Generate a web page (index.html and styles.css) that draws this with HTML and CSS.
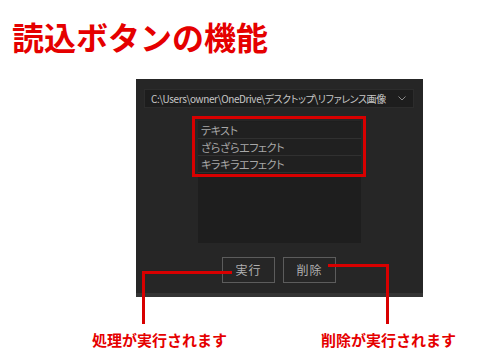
FILE: index.html
```html
<!DOCTYPE html>
<html lang="ja">
<head>
<meta charset="utf-8">
<title>読込ボタンの機能</title>
<link rel="stylesheet" href="styles.css">
</head>
<body>
<div class="page">
  <h1 class="title">読込ボタンの機能</h1>
  <div class="panel">
    <div class="dropdown">
      <span class="path">C:\Users\owner\OneDrive\デスクトップ\リファレンス画像</span>
      <svg class="chev" width="8" height="5" viewBox="0 0 8 5"><path d="M0.5 0.5 L4 4 L7.5 0.5" fill="none" stroke="#8a8a8a" stroke-width="1"/></svg>
    </div>
    <ul class="list">
      <li class="item">テキスト</li>
      <li class="item">ざらざらエフェクト</li>
      <li class="item">キラキラエフェクト</li>
    </ul>
    <div class="buttons">
      <button class="btn">実行</button>
      <button class="btn">削除</button>
    </div>
    <div class="panel-foot"></div>
  </div>
  <div class="labels">
    <span class="label label-run">処理が実行されます</span>
    <span class="label label-del">削除が実行されます</span>
  </div>

  <div class="hl-box"></div>
  <div class="ln ln-run-h"></div>
  <div class="ln ln-run-v"></div>
  <div class="ln ln-del-h"></div>
  <div class="ln ln-del-v"></div>
</div>
</body>
</html>
```
FILE: styles.css
```css
* { box-sizing: border-box; }
html, body { margin: 0; padding: 0; background: #fff; }
.page {
  position: relative;
  width: 498px;
  height: 364px;
  overflow: hidden;
  font-family: "Noto Sans CJK JP", "Noto Sans", sans-serif;
}
.title {
  margin: 0;
  padding: 20px 0 0 12px;
  height: 52px;
  font-size: 32px;
  line-height: 32px;
  font-weight: 700;
  color: #e50000;
}
.panel {
  margin: 27px 0 0 136px;
  width: 287px;
  height: 218px;
  background: #262626;
  display: flex;
  flex-direction: column;
}
.dropdown {
  margin: 10px 0 0 8px;
  width: 270px;
  height: 19px;
  background: #1d1d1d;
  border: 1px solid #2c2c2c;
  display: flex;
  align-items: center;
  padding: 0 6px 0 6px;
  justify-content: space-between;
}
.path {
  font-size: 10px;
  line-height: 17px;
  color: #c8c8c8;
  font-feature-settings: "palt";
  letter-spacing: -0.4px;
  white-space: nowrap;
}
.chev { margin-right: 1px; }
.list {
  list-style: none;
  margin: 13px 0 0 62px;
  padding: 1px 0 0 0;
  width: 163px;
  height: 122px;
  background: #1e1e1e;
}
.item {
  height: 17px;
  border-bottom: 1px solid #303030;
  padding-left: 3px;
  font-size: 11px;
  line-height: 16px;
  color: #a8a8a8;
  font-feature-settings: "palt";
  letter-spacing: -0.4px;
  background: #202020;
}
.buttons {
  display: flex;
  gap: 8px;
  margin: 14px 0 0 86px;
}
.btn {
  width: 53px;
  height: 26px;
  background: transparent;
  border: 1px solid #5c5c5c;
  color: #b0b0b0;
  font-family: "Noto Sans CJK JP", sans-serif;
  font-size: 12px;
  padding: 0;
  line-height: 24px;
  letter-spacing: 1px;
}
.panel-foot {
  margin-top: auto;
  height: 4px;
  background: #343434;
}
.labels {
  display: flex;
  margin-top: 33px;
  padding-left: 92px;
}
.label {
  font-size: 15px;
  line-height: 20px;
  font-weight: 700;
  color: #e50000;
  white-space: nowrap;
}
.label-del { margin-left: 94px; }
.hl-box {
  position: absolute;
  left: 192px;
  top: 116px;
  width: 174px;
  height: 61px;
  border: 3px solid #d80000;
}
.ln { position: absolute; background: #d80000; }
.ln-run-h { left: 142px; top: 271px; width: 90px; height: 3px; }
.ln-run-v { left: 142px; top: 271px; width: 3px; height: 53px; }
.ln-del-h { left: 328px; top: 264px; width: 61px; height: 3px; }
.ln-del-v { left: 386px; top: 264px; width: 3px; height: 60px; }
```
